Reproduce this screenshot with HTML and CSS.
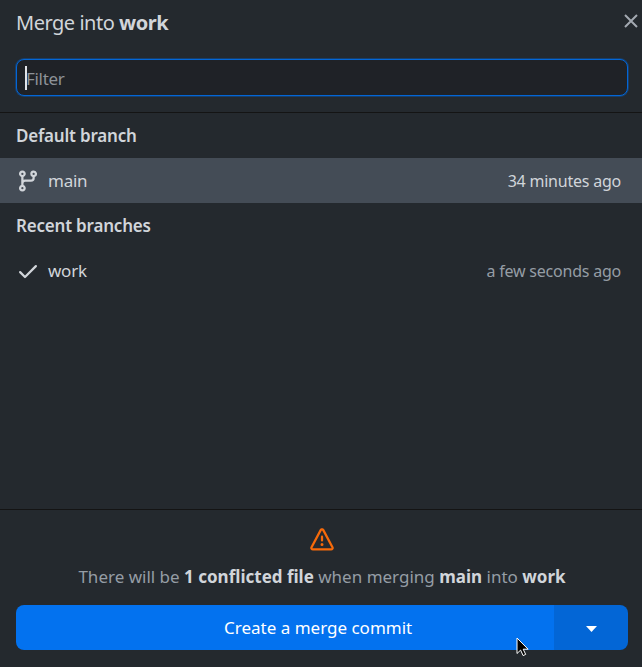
FILE: index.html
```html
<!DOCTYPE html>
<html lang="en">
<head>
<meta charset="utf-8">
<title>Merge into work</title>
<link rel="stylesheet" href="styles.css">
</head>
<body>
<main class="dialog">
  <header class="dialog-header">
    <h1 class="title">Merge into <strong>work</strong></h1>
    <svg class="close" viewBox="0 0 14 14"><path d="M1 1l12 12M13 1L1 13"/></svg>
  </header>
  <div class="filter"><span class="caret"></span><span class="placeholder">Filter</span></div>
  <section class="branches">
    <h2 class="group">Default branch</h2>
    <div class="row selected">
      <svg class="icon" viewBox="0 0 16 16"><path d="M9.5 3.25a2.25 2.25 0 1 1 3 2.122V6A2.5 2.5 0 0 1 10 8.5H6a1 1 0 0 0-1 1v1.128a2.251 2.251 0 1 1-1.5 0V5.372a2.25 2.25 0 1 1 1.5 0v1.836A2.493 2.493 0 0 1 6 7h4a1 1 0 0 0 1-1v-.628A2.25 2.25 0 0 1 9.5 3.25Zm-6 0a.75.75 0 1 0 1.5 0 .75.75 0 0 0-1.5 0Zm8.25-.75a.75.75 0 1 0 0 1.5.75.75 0 0 0 0-1.5ZM4.25 12a.75.75 0 1 0 0 1.5.75.75 0 0 0 0-1.5Z"/></svg>
      <span class="name">main</span>
      <span class="time">34 minutes ago</span>
    </div>
    <h2 class="group">Recent branches</h2>
    <div class="row">
      <svg class="icon" viewBox="0 0 16 16"><path d="M13.78 4.22a.75.75 0 0 1 0 1.06l-7.25 7.25a.75.75 0 0 1-1.06 0L2.22 9.28a.75.75 0 0 1 1.06-1.06L6 10.94l6.72-6.72a.75.75 0 0 1 1.06 0Z"/></svg>
      <span class="name">work</span>
      <span class="time">a few seconds ago</span>
    </div>
  </section>
  <footer class="dialog-footer">
    <svg class="warning" viewBox="0 0 16 16"><path d="M6.457 1.047c.659-1.234 2.427-1.234 3.086 0l6.082 11.378A1.75 1.75 0 0 1 14.082 15H1.918a1.75 1.75 0 0 1-1.543-2.575Zm1.763.707a.25.25 0 0 0-.44 0L1.698 13.132a.25.25 0 0 0 .22.368h12.164a.25.25 0 0 0 .22-.368Zm.53 3.996v2.5a.75.75 0 0 1-1.5 0v-2.5a.75.75 0 0 1 1.5 0ZM9 11a1 1 0 1 1-2 0 1 1 0 0 1 2 0Z"/></svg>
    <p class="message">There will be <strong>1 conflicted file</strong> when merging <strong>main</strong> into <strong>work</strong></p>
    <div class="button">
      <span class="button-label">Create a merge commit</span>
      <span class="button-menu"><svg class="arrow" viewBox="0 0 11 6"><path d="M0 0h11L5.500 6z"/></svg></span>
    </div>
  </footer>
  <svg class="cursor" viewBox="0 0 13 20"><path d="M1 1v15.500l3.600-3.400 2.500 5.500 2.600-1.200-2.500-5.200h4.900z"/></svg>
</main>
</body>
</html>
```
FILE: styles.css
```css
* { box-sizing: border-box; }
body {
  margin: 0;
  background: #24292e;
  color: #d1d5da;
  font-family: "Noto Sans", sans-serif;
  font-size: 17px;
}
h1, h2, p { margin: 0; font-weight: 400; }
strong { font-weight: 700; }
svg { display: block; fill: currentColor; flex: none; }
.dialog {
  position: relative;
  display: flex;
  flex-direction: column;
  width: 642px;
  height: 667px;
  overflow: hidden;
}
.dialog-header {
  display: flex;
  justify-content: space-between;
  height: 59px;
  padding: 8px 4px 0 16px;
}
.title { padding-top: 1px; font-size: 20px; line-height: 28px; letter-spacing: -.48px; white-space: nowrap; }
.close { width: 14px; height: 14px; margin-top: 6px; fill: none; stroke: #a3a9b1; stroke-width: 2; }
.filter {
  display: flex;
  align-items: center;
  height: 37px;
  margin: 0 14px 16px 16px;
  padding-left: 8px;
  border: 1px solid #0366d6;
  border-radius: 8px;
  box-shadow: 0 0 0 1px rgba(3, 102, 214, .35);
  background: #1f2227;
  color: #8d9298;
}
.caret { width: 2px; height: 24px; margin-right: -1px; background: #e1e4e8; }
.placeholder { padding-top: 2px; letter-spacing: -.3px; }
.branches { flex: 1; border-top: 1px solid #141414; }
.group { height: 45px; padding-left: 16px; font-size: 17px; font-weight: 600; line-height: 45px; letter-spacing: -.2px; }
.row { display: flex; align-items: center; height: 45px; padding: 0 21px 0 16px; line-height: 45px; }
.selected { background: #444c56; }
.icon { width: 24px; height: 24px; margin-right: 8px; }
.name { flex: 1; letter-spacing: -.25px; }
.time { padding-top: 2px; font-size: 16px; letter-spacing: -.22px; color: #959da5; }
.selected .time { color: #d1d5da; }
.dialog-footer {
  display: flex;
  flex-direction: column;
  height: 158px;
  padding: 18px 14px 17px 16px;
  border-top: 1px solid #141414;
}
.warning { width: 24px; height: 24px; align-self: center; color: #f66a0a; }
.message { height: 53px; padding-top: 12px; line-height: 26px; text-align: center; color: #959da5; white-space: nowrap; }
.message strong { color: #d1d5da; }
.button { display: flex; height: 45px; border-radius: 8px; overflow: hidden; color: #fff; line-height: 45px; }
.button-label { width: 538px; padding-left: 208px; background: #0372ef; white-space: nowrap; }
.button-menu { display: flex; flex: 1; align-items: center; justify-content: center; background: #0366d6; }
.arrow { width: 11px; height: 6px; margin-top: 3px; }
.cursor { position: absolute; left: 516px; top: 637px; width: 13px; height: 20px; fill: #000; stroke: #fff; stroke-width: 1; }
```
